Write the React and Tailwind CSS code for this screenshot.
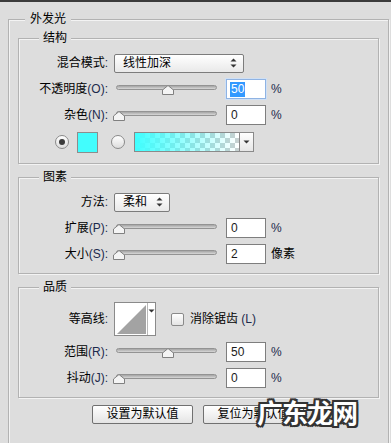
const ink = "text-[#1c2a4c]";

function Label({ cn, en, width = "w-[89px]" }) {
  return (
    <div className={`${width} shrink-0 text-right whitespace-nowrap`}>
      {cn}
      {en && <span className={ink}>{en}</span>}
    </div>
  );
}

function Thumb({ value }) {
  return (
    <svg
      className="absolute top-[2px]"
      style={{ left: value * 0.97 - 3 }}
      width="12"
      height="10"
      viewBox="0 0 12 10"
    >
      <polygon
        points="0.5,9.5 0.5,5 6,0.5 11.5,5 11.5,9.5"
        fill="#f4f4f4"
        stroke="#808080"
        strokeWidth="1"
      />
    </svg>
  );
}

function Slider({ value }) {
  return (
    <div className="relative ml-[8px] h-[12px] w-[101px] shrink-0">
      <div className="mt-[2px] h-[5px] w-full rounded-full border border-[#939393] bg-gradient-to-b from-[#a4a4a4] to-[#d8d8d8]" />
      <Thumb value={value} />
    </div>
  );
}

function NumInput({ value, focused }) {
  return (
    <div
      className={`ml-[9px] flex h-[20px] w-[40px] shrink-0 items-center bg-white pl-[3px] ${
        focused
          ? "border border-[#8fb3e3] shadow-[0_0_0_1px_#cfe0f5]"
          : "border border-[#7e7e7e]"
      }`}
    >
      {focused ? (
        <span className="bg-[#3399ff] px-[1px] leading-[15px] text-white">{value}</span>
      ) : (
        <span className="px-[1px] text-[#1b1b1b]">{value}</span>
      )}
    </div>
  );
}

function SliderRow({ cn, en, value, text, unit, focused }) {
  return (
    <div className="flex h-[26px] items-center">
      <Label cn={cn} en={en} />
      <Slider value={value} />
      <NumInput value={text} focused={focused} />
      <div className={`ml-[5px] ${unit === "%" ? ink : "text-black"}`}>{unit}</div>
    </div>
  );
}

function UpDown() {
  return (
    <svg width="7" height="10" viewBox="0 0 7 10" className="shrink-0">
      <polygon points="3.5,0.5 6.5,3.5 0.5,3.5" fill="#333" />
      <polygon points="0.5,6.5 6.5,6.5 3.5,9.5" fill="#333" />
    </svg>
  );
}

function Select({ text, width }) {
  return (
    <div
      className={`ml-[6px] flex h-[19px] ${width} shrink-0 items-center justify-between rounded-[2px] border border-[#7c7c7c] bg-gradient-to-b from-white to-[#e9e9e9] pl-[8px] pr-[6px]`}
    >
      <span>{text}</span>
      <UpDown />
    </div>
  );
}

function Radio({ checked }) {
  return (
    <div className="flex h-[14px] w-[14px] shrink-0 items-center justify-center rounded-full border border-[#8a8a8a] bg-gradient-to-b from-white to-[#dcdcdc]">
      {checked && <div className="h-[6px] w-[6px] rounded-full bg-[#3a3a3a]" />}
    </div>
  );
}

function Caret() {
  return (
    <svg width="7" height="4" viewBox="0 0 7 4">
      <polygon points="0.5,0.5 6.5,0.5 3.5,3.5" fill="#333" />
    </svg>
  );
}

function Group({ title, className, children }) {
  return (
    <fieldset
      className={`ml-[9px] w-[361px] border border-[#b2b2b2] shadow-[1px_1px_0_#f3f3f3,inset_1px_1px_0_#f3f3f3] ${className}`}
    >
      <legend className="ml-[20px] bg-[#dddddd] px-[4px] leading-[16px]">{title}</legend>
      {children}
    </fieldset>
  );
}

export default function App() {
  return (
    <div className="h-[443px] w-[391px] overflow-hidden bg-[#dddddd] font-['Liberation_Sans','Noto_Sans_CJK_SC',sans-serif] text-[12px] text-black relative">
      <div className="h-[2px] bg-[#3b3b3b]" />

      <fieldset className="ml-[8px] mt-[9px] w-[381px] border border-[#b2b2b2] pb-[40px] shadow-[1px_1px_0_#f3f3f3,inset_1px_1px_0_#f3f3f3]">
        <legend className="ml-[16px] bg-[#dddddd] px-[5px] leading-[16px]">外发光</legend>

        <Group title="结构" className="mt-[3px] pb-[7px] pt-[4px]">
          <div className="flex h-[26px] items-center">
            <Label cn="混合模式" en=":" />
            <Select text="线性加深" width="w-[130px]" />
          </div>
          <SliderRow cn="不透明度" en="(O):" value={50} text="50" unit="%" focused />
          <SliderRow cn="杂色" en="(N):" value={0} text="0" unit="%" />
          <div className="flex h-[28px] items-center">
            <div className="ml-[36px]">
              <Radio checked />
            </div>
            <div className="ml-[8px] h-[21px] w-[21px] border border-[#8d8d8d] bg-[#42fdfd]" />
            <div className="ml-[13px]">
              <Radio />
            </div>
            <div className="ml-[9px] flex h-[20px] w-[120px] border border-[#8a8a8a]">
              <div className="h-full flex-1 bg-[conic-gradient(#c8d0d0_25%,#ffffff_0_50%,#c8d0d0_0_75%,#ffffff_0)] bg-[length:10px_10px]">
                <div className="h-full w-full bg-gradient-to-r from-[#40ffff] to-[#40ffff00]" />
              </div>
              <div className="flex w-[14px] items-center justify-center border-l border-[#8a8a8a] bg-gradient-to-b from-white to-[#e6e6e6]">
                <Caret />
              </div>
            </div>
          </div>
        </Group>

        <Group title="图素" className="mt-[5px] pb-[6px] pt-[4px]">
          <div className="flex h-[26px] items-center">
            <Label cn="方法" en=":" />
            <Select text="柔和" width="w-[56px]" />
          </div>
          <SliderRow cn="扩展" en="(P):" value={0} text="0" unit="%" />
          <SliderRow cn="大小" en="(S):" value={0} text="2" unit="像素" />
        </Group>

        <Group title="品质" className="mt-[5px] pb-[6px] pt-[4px]">
          <div className="flex h-[40px] items-center">
            <Label cn="等高线" en=":" />
            <div className="ml-[6px] flex h-[34px] w-[42px] border border-[#8a8a8a] bg-white">
              <svg width="32" height="32" viewBox="0 0 32 32" className="shrink-0">
                <polygon points="2,31 31,2 31,31" fill="#a3a3a3" />
              </svg>
              <div className="flex flex-1 items-start justify-center border-l border-[#b8b8b8] pt-[6px]">
                <Caret />
              </div>
            </div>
            <div className="ml-[15px] h-[13px] w-[13px] rounded-[2px] border border-[#8a8a8a] bg-gradient-to-b from-white to-[#e4e4e4]" />
            <div className="ml-[6px]">
              消除锯齿 <span className={ink}>(L)</span>
            </div>
          </div>
          <SliderRow cn="范围" en="(R):" value={50} text="50" unit="%" />
          <SliderRow cn="抖动" en="(J):" value={0} text="0" unit="%" />
        </Group>

        <div className="mt-[7px] flex gap-[10px] pl-[83px]">
          <button className="h-[19px] w-[101px] rounded-[2px] border border-[#707070] bg-gradient-to-b from-white to-[#e4e4e4] leading-[17px]">
            设置为默认值
          </button>
          <button className="h-[19px] w-[101px] rounded-[2px] border border-[#707070] bg-gradient-to-b from-white to-[#e4e4e4] leading-[17px]">
            复位为默认值
          </button>
        </div>
      </fieldset>

      <div className="absolute left-[257px] top-[398px] text-[26px] font-bold leading-[32px] tracking-[-1px] text-white [text-shadow:-2px_-2px_0_#333,2px_-2px_0_#333,-2px_2px_0_#333,2px_2px_0_#333,0_2px_0_#333,0_-2px_0_#333,2px_0_0_#333,-2px_0_0_#333]">
        广东龙网
      </div>
    </div>
  );
}
